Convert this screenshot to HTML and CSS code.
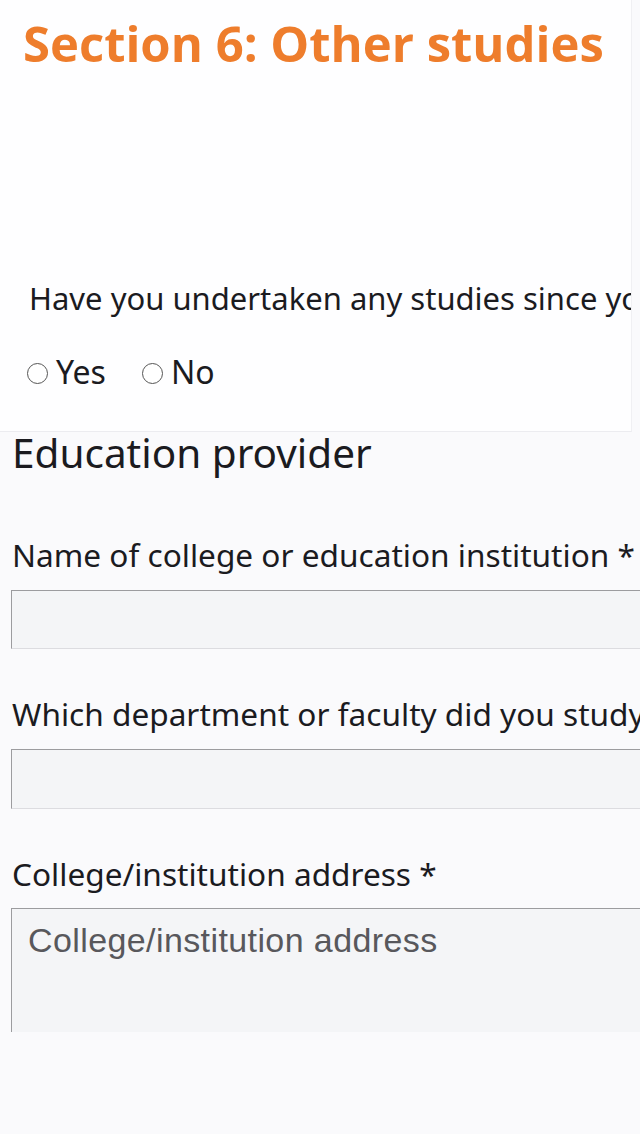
FILE: index.html
```html
<!DOCTYPE html>
<html lang="en">
<head>
<meta charset="utf-8">
<title>Section 6: Other studies</title>
<link rel="stylesheet" href="styles.css">
</head>
<body>
<div class="page">
  <section class="intro">
    <h1 class="title">Section 6: Other studies</h1>
    <p class="question">Have you undertaken any studies since you left school?</p>
    <div class="radios">
      <label class="radio"><span class="circle"></span><span class="radio-text">Yes</span></label>
      <label class="radio"><span class="circle"></span><span class="radio-text">No</span></label>
    </div>
  </section>
  <section class="provider">
    <h2 class="heading">Education provider</h2>
    <div class="field field-first">
      <div class="label">Name of college or education institution *</div>
      <div class="input"></div>
    </div>
    <div class="field">
      <div class="label">Which department or faculty did you study in? *</div>
      <div class="input input-tall"></div>
    </div>
    <div class="field">
      <div class="label">College/institution address *</div>
      <div class="textarea"><span class="placeholder">College/institution address</span></div>
    </div>
  </section>
</div>
</body>
</html>
```
FILE: styles.css
```css
html, body {
  margin: 0;
  padding: 0;
}
body {
  background: #fafafc;
  width: 640px;
  height: 1134px;
  overflow: hidden;
  font-family: "Noto Sans", Lato, sans-serif;
  color: #1b1b1f;
}
.page {
  width: 640px;
  height: 1134px;
  overflow: hidden;
}
.intro {
  height: 431px;
  width: 631px;
  background: #fefeff;
  border-right: 1px solid #f0f0f3;
  border-bottom: 1px solid #ececf0;
  box-sizing: content-box;
  overflow: hidden;
}
.title {
  margin: 0;
  padding: 17px 0 0 23px;
  font-family: "Open Sans", "Noto Sans", sans-serif;
  font-weight: 700;
  font-size: 49px;
  line-height: 53px;
  color: #ee7d2c;
  white-space: nowrap;
}
.question {
  margin: 211px 0 0 29px;
  font-size: 31px;
  line-height: 35px;
  white-space: nowrap;
}
.radios {
  display: flex;
  gap: 36px;
  margin: 37px 0 0 27px;
}
.radio {
  display: flex;
  align-items: center;
  gap: 8px;
  font-size: 32px;
  line-height: 37px;
}
.circle {
  width: 19px;
  height: 19px;
  border: 1.5px solid #555;
  border-radius: 50%;
  background: #fff;
  margin-top: 3px;
}
.provider {
  padding-left: 11px;
  white-space: nowrap;
}
.heading {
  margin: 0;
  font-weight: 400;
  font-size: 40.5px;
  line-height: 42px;
  padding-left: 1px;
}
.field {
  margin-top: 47px;
}
.field-first {
  margin-top: 63px;
}
.label {
  font-size: 31.6px;
  line-height: 35px;
  padding-left: 1px;
}
.input {
  margin-top: 18px;
  height: 57px;
  width: 700px;
  background: #f4f5f7;
  border-top: 1px solid #9c9c9f;
  border-left: 1px solid #9c9c9f;
  border-bottom: 1px solid #dcdce0;
}
.input-tall {
  height: 58px;
}
.textarea {
  margin-top: 17px;
  height: 124px;
  width: 700px;
  background: #f4f5f7;
  border-top: 1px solid #9c9c9f;
  border-left: 1px solid #9c9c9f;
  box-sizing: border-box;
  padding: 13px 0 0 16px;
}
.placeholder {
  font-family: "Liberation Sans", Arial, sans-serif;
  font-size: 34px;
  letter-spacing: 0.4px;
  line-height: 36px;
  color: #58585c;
}
```
